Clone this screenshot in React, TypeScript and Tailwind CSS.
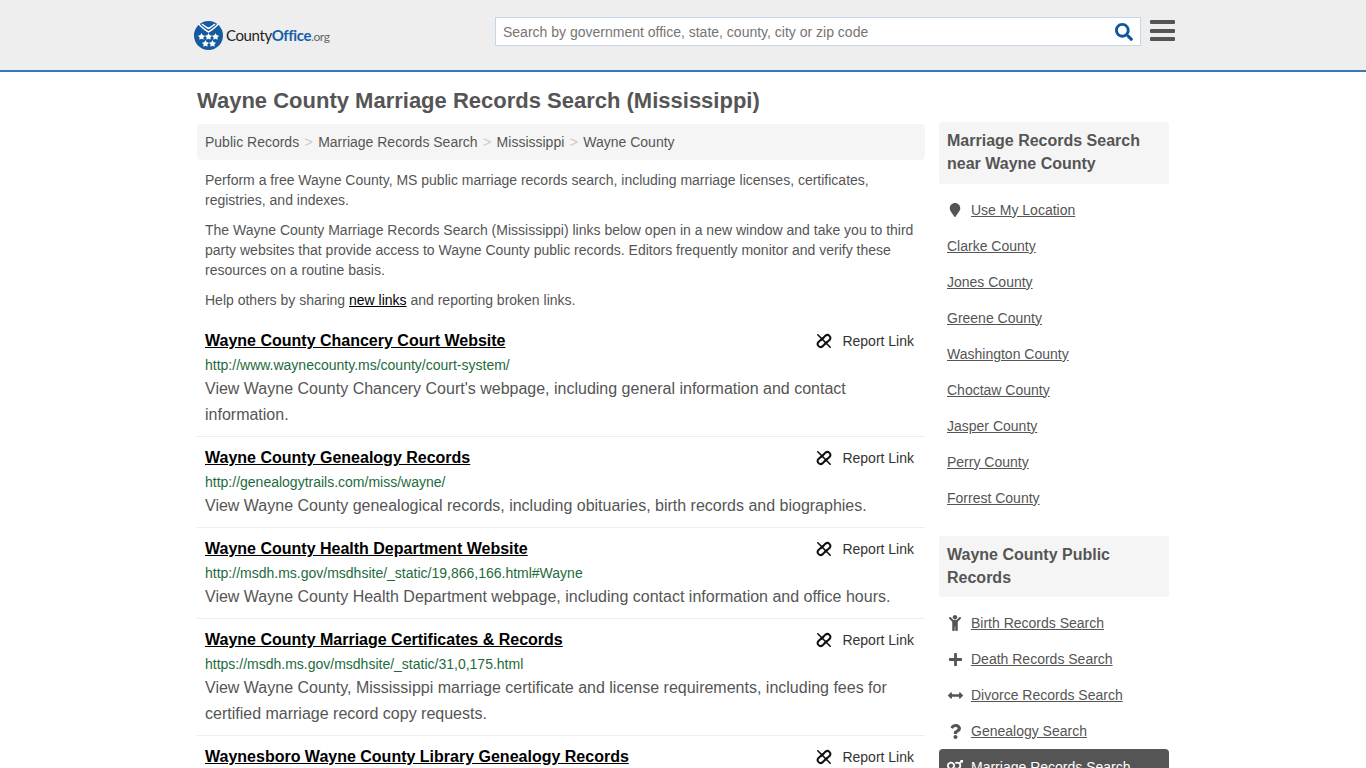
import { FaChild, FaMapMarker, FaPlus, FaArrowsAltH, FaQuestion, FaVenusMars, FaSearch, FaStar } from 'react-icons/fa';

const results = [
  {
    title: 'Wayne County Chancery Court Website',
    url: 'http://www.waynecounty.ms/county/court-system/',
    desc: "View Wayne County Chancery Court's webpage, including general information and contact information.",
  },
  {
    title: 'Wayne County Genealogy Records',
    url: 'http://genealogytrails.com/miss/wayne/',
    desc: 'View Wayne County genealogical records, including obituaries, birth records and biographies.',
  },
  {
    title: 'Wayne County Health Department Website',
    url: 'http://msdh.ms.gov/msdhsite/_static/19,866,166.html#Wayne',
    desc: 'View Wayne County Health Department webpage, including contact information and office hours.',
  },
  {
    title: 'Wayne County Marriage Certificates & Records',
    url: 'https://msdh.ms.gov/msdhsite/_static/31,0,175.html',
    desc: 'View Wayne County, Mississippi marriage certificate and license requirements, including fees for certified marriage record copy requests.',
  },
  {
    title: 'Waynesboro Wayne County Library Genealogy Records',
    url: '',
    desc: '',
  },
];

const nearby = [
  'Clarke County',
  'Jones County',
  'Greene County',
  'Washington County',
  'Choctaw County',
  'Jasper County',
  'Perry County',
  'Forrest County',
];

const publicRecords = [
  { name: 'Birth Records Search', icon: <FaChild size={16} /> },
  { name: 'Death Records Search', icon: <FaPlus size={15} /> },
  { name: 'Divorce Records Search', icon: <FaArrowsAltH size={15} /> },
  { name: 'Genealogy Search', icon: <FaQuestion size={15} /> },
];

function UnlinkIcon() {
  return (
    <svg width="16" height="16" viewBox="0 0 16 16" fill="none" stroke="#111" strokeWidth="2" strokeLinecap="round">
      <path d="M5.6 6.8 9.500 2.600a3 3 0 0 1 4.200 4.200L9.400 10.800" />
      <path d="M10.400 9.200 6.500 13.400a3 3 0 0 1-4.200-4.200L6.600 5.200" />
      <path d="M1.800 1.800 14.200 14.200" strokeWidth="1.600" />
    </svg>
  );
}

function Logo() {
  return (
    <div className="flex items-center gap-[3px]">
      <div className="w-[29px] h-[29px] rounded-full bg-[#155a9e] flex flex-col items-center justify-end pb-[3px] text-white">
        <svg width="21" height="10" viewBox="0 0 21 10" fill="none" stroke="#fff" strokeWidth="1.5">
          <path d="M1 1c2 3.5 5.5 5 9.5 8 4-3 7.5-4.500 9.500-8M4 1c2 2 4 3 6.500 4.500C13 4 15 3 17 1" />
        </svg>
        <div className="flex">
          <FaStar size={7} />
          <FaStar size={7} />
          <FaStar size={7} />
        </div>
        <div className="flex">
          <FaStar size={7} />
          <FaStar size={7} />
        </div>
      </div>
      <div className="text-[15px] tracking-[-0.4px] font-['Lato',sans-serif] text-[#222]">
        County<span className="text-[#1560a8] font-bold">Office</span>
        <span className="text-[12px] text-[#666]">.org</span>
      </div>
    </div>
  );
}

function Header() {
  return (
    <header className="h-[72px] bg-[#eeeeee] border-b-2 border-b-[#337ab7] shrink-0">
      <div className="w-[981px] ml-[194px] flex items-start">
        <div className="w-[301px] pt-[21px]">
          <Logo />
        </div>
        <div className="w-[646px] h-[29px] mt-[17px] bg-white border border-[#c5d7e6] flex items-center pl-[7px] pr-[7px]">
          <span className="flex-1 text-[14px] text-[#757575] pt-[1px]">Search by government office, state, county, city or zip code</span>
          <FaSearch size={18} className="text-[#0f56a0]" />
        </div>
        <div className="ml-[9px] mt-[20px] w-[25px] flex flex-col gap-[4.5px]">
          <div className="h-[4px] rounded-[1px] bg-[#555]" />
          <div className="h-[4px] rounded-[1px] bg-[#555]" />
          <div className="h-[4px] rounded-[1px] bg-[#555]" />
        </div>
      </div>
    </header>
  );
}

function ResultItem({ item }: { item: (typeof results)[number] }) {
  return (
    <div className="px-2 pt-[9px] pb-[8px] border-b border-b-[#eeeeee]">
      <div className="flex items-center justify-between h-[24px]">
        <a className="text-[16px] font-bold text-black underline">{item.title}</a>
        <span className="flex items-center gap-[10px] text-[14px] text-[#333] pr-[3px]">
          <UnlinkIcon />
          Report Link
        </span>
      </div>
      {item.url && <div className="text-[14px] leading-[20px] mt-[2px] text-[#1d6b3c]">{item.url}</div>}
      {item.desc && <p className="text-[16px] leading-[26px] mt-[1px] text-[#555]">{item.desc}</p>}
    </div>
  );
}

function SideLink({ icon, name }: { icon?: React.ReactNode; name: string }) {
  return (
    <div className="h-[36px] flex items-center px-2 text-[14px] text-[#555]">
      {icon && <span className="w-[16px] mr-[8px] flex justify-center text-[#555]">{icon}</span>}
      <a className="underline">{name}</a>
    </div>
  );
}

export default function App() {
  return (
    <div className="h-screen overflow-hidden flex flex-col bg-white font-['Liberation_Sans',Arial,sans-serif] text-[#555]">
      <Header />
      <div className="w-[972px] ml-[197px] flex gap-[14px]">
        <main className="w-[728px] shrink-0">
          <h1 className="text-[22px] leading-[28px] font-bold mt-[15px] mb-[9px]">
            Wayne County Marriage Records Search (Mississippi)
          </h1>
          <nav className="h-[36px] bg-[#f5f5f5] rounded-[4px] flex items-center px-2 text-[14px]">
            <span>Public Records</span>
            <span className="mx-[5.4px] text-[#ccc]">&gt;</span>
            <span>Marriage Records Search</span>
            <span className="mx-[5.4px] text-[#ccc]">&gt;</span>
            <span>Mississippi</span>
            <span className="mx-[5.4px] text-[#ccc]">&gt;</span>
            <span>Wayne County</span>
          </nav>
          <div className="px-2 pt-[10px] text-[14px] leading-[20px] flex flex-col gap-[10px]">
            <p>
              Perform a free Wayne County, MS public marriage records search, including marriage licenses, certificates,
              registries, and indexes.
            </p>
            <p>
              The Wayne County Marriage Records Search (Mississippi) links below open in a new window and take you to
              third party websites that provide access to Wayne County public records. Editors frequently monitor and
              verify these resources on a routine basis.
            </p>
            <p>
              Help others by sharing <a className="text-black underline">new links</a> and reporting broken links.
            </p>
          </div>
          <div className="mt-[10px]">
            {results.map((item) => (
              <ResultItem key={item.title} item={item} />
            ))}
          </div>
        </main>
        <aside className="w-[230px] shrink-0 pt-[50px]">
          <h2 className="bg-[#f5f5f5] rounded-[2px] px-2 pt-[7px] pb-[9px] text-[16px] leading-[23px] font-bold mb-[8px]">
            Marriage Records Search near Wayne County
          </h2>
          <SideLink icon={<FaMapMarker size={14} />} name="Use My Location" />
          {nearby.map((name) => (
            <SideLink key={name} name={name} />
          ))}
          <h2 className="bg-[#f5f5f5] rounded-[2px] px-2 pt-[7px] pb-[8px] text-[16px] leading-[23px] font-bold mt-[20px] mb-[8px]">
            Wayne County Public Records
          </h2>
          {publicRecords.map((r) => (
            <SideLink key={r.name} icon={r.icon} name={r.name} />
          ))}
          <div className="h-[36px] bg-[#555] rounded-[4px] flex items-center px-2 text-[14px] text-white">
            <span className="w-[16px] mr-[8px] flex justify-center">
              <FaVenusMars size={18} />
            </span>
            <a className="underline">Marriage Records Search</a>
          </div>
        </aside>
      </div>
    </div>
  );
}
